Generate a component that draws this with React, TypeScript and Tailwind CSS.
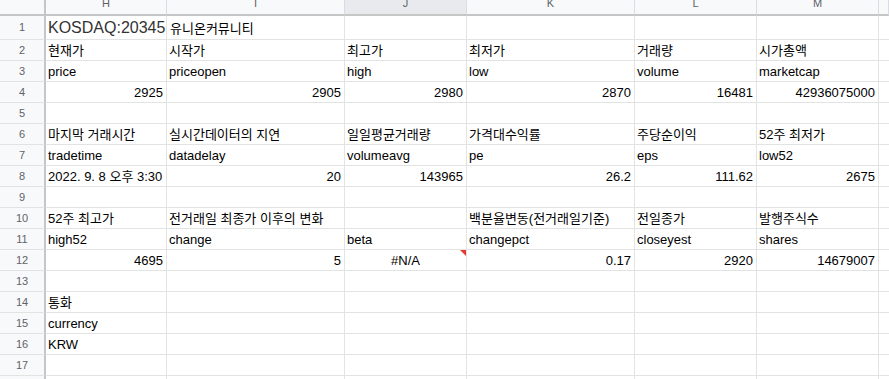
type Align = "l" | "r" | "c";
type Cell = { v: string; a?: Align; note?: boolean };

const cols = ["H", "I", "J", "K", "L", "M", ""];

const t = (v: string): Cell => ({ v });
const n = (v: string): Cell => ({ v, a: "r" });
const e: Cell = { v: "" };

const rows: Cell[][] = [
  [t("현재가"), t("시작가"), t("최고가"), t("최저가"), t("거래량"), t("시가총액")],
  [t("price"), t("priceopen"), t("high"), t("low"), t("volume"), t("marketcap")],
  [n("2925"), n("2905"), n("2980"), n("2870"), n("16481"), n("42936075000")],
  [e, e, e, e, e, e],
  [t("마지막 거래시간"), t("실시간데이터의 지연"), t("일일평균거래량"), t("가격대수익률"), t("주당순이익"), t("52주 최저가")],
  [t("tradetime"), t("datadelay"), t("volumeavg"), t("pe"), t("eps"), t("low52")],
  [t("2022. 9. 8 오후 3:30"), n("20"), n("143965"), n("26.2"), n("111.62"), n("2675")],
  [e, e, e, e, e, e],
  [t("52주 최고가"), t("전거래일 최종가 이후의 변화"), e, t("백분율변동(전거래일기준)"), t("전일종가"), t("발행주식수")],
  [t("high52"), t("change"), t("beta"), t("changepct"), t("closeyest"), t("shares")],
  [n("4695"), n("5"), { v: "#N/A", a: "c", note: true }, n("0.17"), n("2920"), n("14679007")],
  [e, e, e, e, e, e],
  [t("통화"), e, e, e, e, e],
  [t("currency"), e, e, e, e, e],
  [t("KRW"), e, e, e, e, e],
  [e, e, e, e, e, e],
  [e, e, e, e, e, e],
];

function RowNum({ i }: { i: number }) {
  return (
    <div className="flex items-center justify-center bg-[#f8f9fa] border-r-2 border-r-[#c4c7c5] border-b border-b-[#e1e3e1] text-[11px] text-[#5f6368]">
      {i}
    </div>
  );
}

function DataCell({ c }: { c: Cell }) {
  const justify = c.a === "r" ? "justify-end pr-[3px]" : c.a === "c" ? "justify-center" : "justify-start pl-[2px]";
  return (
    <div className={`relative flex items-center overflow-hidden whitespace-nowrap border-r border-b border-[#e2e3e3] text-[13px] leading-[15px] text-black ${justify}`}>
      {c.v}
      {c.note && (
        <span className="absolute top-0 right-0 w-0 h-0 border-l-[6px] border-l-transparent border-t-[6px] border-t-[#e53935]" />
      )}
    </div>
  );
}

export default function App() {
  return (
    <div
      className="w-[889px] h-[379px] overflow-hidden bg-white"
      style={{ fontFamily: '"Liberation Sans", Arial, "Noto Sans CJK KR", sans-serif' }}
    >
      <div className="grid grid-cols-[46px_121px_178px_122px_168px_122px_122px_1fr] grid-rows-[16px_24px_repeat(17,21px)]">
        {/* column header row */}
        <div className="bg-[#f8f9fa] border-r-2 border-b-2 border-[#c4c7c5]" />
        {cols.map((c) => (
          <div
            key={c || "n"}
            className={`flex justify-center overflow-hidden border-r border-r-[#dadce0] border-b-2 border-b-[#c4c7c5] text-[11px] leading-[11px] text-[#5f6368] ${c === "J" ? "bg-[#e8eaed]" : "bg-[#f8f9fa]"}`}
          >
            <span className="mt-[-2px]">{c}</span>
          </div>
        ))}

        {/* row 1 */}
        <RowNum i={1} />
        <div className="flex items-end pb-[2px] pl-[2px] overflow-hidden whitespace-nowrap border-r border-b border-[#e2e3e3] text-[16px] leading-[18px] text-[#333]">
          KOSDAQ:20345
        </div>
        <div className="flex items-end pb-[3px] pl-[3px] overflow-hidden whitespace-nowrap border-r border-b border-[#e2e3e3] text-[13px] leading-[15px] text-black">
          유니온커뮤니티
        </div>
        {[0, 1, 2, 3].map((k) => (
          <div key={k} className="border-r border-b border-[#e2e3e3]" />
        ))}
        <div className="border-b border-[#e2e3e3]" />

        {rows.map((r, i) => (
          <Row key={i} i={i + 2} cells={r} />
        ))}
      </div>
    </div>
  );
}

function Row({ i, cells }: { i: number; cells: Cell[] }) {
  return (
    <>
      <RowNum i={i} />
      {cells.map((c, k) => (
        <DataCell key={k} c={c} />
      ))}
      <div className="border-b border-[#e2e3e3]" />
    </>
  );
}
